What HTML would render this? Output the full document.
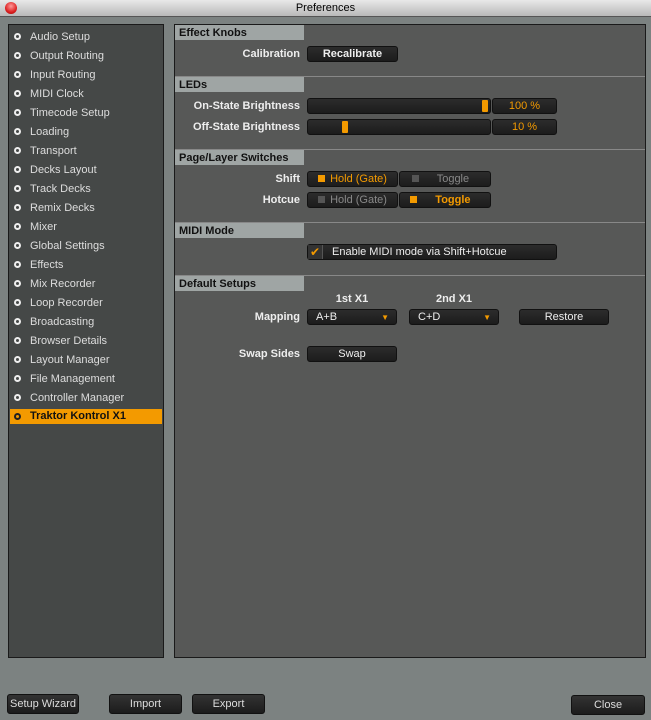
<!DOCTYPE html>
<html><head><style>
*{margin:0;padding:0;box-sizing:border-box}
body{width:651px;height:720px;background:#7c8281;font-family:"Liberation Sans",sans-serif;font-size:11px;position:relative;overflow:hidden;color:#eee}
.a{position:absolute}
#title{left:0;top:0;width:651px;height:17px;background:linear-gradient(#e8e8e8,#b8b8b8);border-bottom:1px solid #555;text-align:center;color:#000;font-size:11px;line-height:16px}
#dot{left:5px;top:2px;width:12px;height:12px;border-radius:50%;background:radial-gradient(circle at 50% 35%,#f99,#d22 60%,#900)}
#left{left:8px;top:24px;width:156px;height:634px;background:#454847;border:1px solid #1a1a1a}
#right{left:174px;top:24px;width:472px;height:634px;background:#575857;border:1px solid #1a1a1a}
.it{position:absolute;left:2px;width:152px;height:15px;line-height:17px;padding-left:20px;color:#ddd}
.it:before{content:"";position:absolute;left:4px;top:4px;width:7px;height:7px;border-radius:50%;border:2px solid #eee;box-sizing:border-box}
.sel{background:#f39a00;color:#111;font-weight:bold;line-height:15px}
.sel:before{border-color:#222;background:#f39a00}
.hd{position:absolute;left:175px;width:129px;height:15px;background:#9fa5a4;color:#111;font-weight:bold;padding-left:4px;line-height:17px}
.ln{position:absolute;left:175px;width:470px;height:1px;background:#888}
.lb{position:absolute;width:126px;text-align:right;left:174px;color:#eee;font-weight:bold;line-height:17px}
.b{position:absolute;background:linear-gradient(#2c2c2c,#1c1c1c);border:1px solid #111;border-radius:3px;color:#eee;text-align:center;line-height:15px;height:16px;font-weight:bold}
.o{color:#f39a00}
.g{color:#888}
.sq{display:inline-block;width:7px;height:7px;margin-right:5px;vertical-align:0}
.bb{position:absolute;background:linear-gradient(#333,#1c1c1c);border:1px solid #111;border-radius:3px;color:#ddd;text-align:center;line-height:19px;height:20px}
</style></head><body>
<div id="title" class="a">Preferences</div><div id="dot" class="a"></div>
<div id="left" class="a"></div>
<div id="right" class="a"></div>
<div class="a" style="left:8px;top:24px">
<div class="it" style="top:5px">Audio Setup</div>
<div class="it" style="top:24px">Output Routing</div>
<div class="it" style="top:43px">Input Routing</div>
<div class="it" style="top:62px">MIDI Clock</div>
<div class="it" style="top:81px">Timecode Setup</div>
<div class="it" style="top:100px">Loading</div>
<div class="it" style="top:119px">Transport</div>
<div class="it" style="top:138px">Decks Layout</div>
<div class="it" style="top:157px">Track Decks</div>
<div class="it" style="top:176px">Remix Decks</div>
<div class="it" style="top:195px">Mixer</div>
<div class="it" style="top:214px">Global Settings</div>
<div class="it" style="top:233px">Effects</div>
<div class="it" style="top:252px">Mix Recorder</div>
<div class="it" style="top:271px">Loop Recorder</div>
<div class="it" style="top:290px">Broadcasting</div>
<div class="it" style="top:309px">Browser Details</div>
<div class="it" style="top:328px">Layout Manager</div>
<div class="it" style="top:347px">File Management</div>
<div class="it" style="top:366px">Controller Manager</div>
<div class="it sel" style="top:385px">Traktor Kontrol X1</div>
</div>
<div class="hd" style="top:25px">Effect Knobs</div>
<div class="lb" style="top:46px">Calibration</div>
<div class="b" style="left:307px;top:46px;width:91px">Recalibrate</div>
<div class="ln" style="top:76px"></div>
<div class="hd" style="top:77px">LEDs</div>
<div class="lb" style="top:98px">On-State Brightness</div>
<div class="b" style="left:307px;top:98px;width:184px"></div>
<div class="a" style="left:482px;top:100px;width:6px;height:12px;background:#f39a00;border-radius:1px"></div>
<div class="b o" style="left:492px;top:98px;width:65px;font-weight:normal">100 %</div>
<div class="lb" style="top:119px">Off-State Brightness</div>
<div class="b" style="left:307px;top:119px;width:184px"></div>
<div class="a" style="left:342px;top:121px;width:6px;height:12px;background:#f39a00;border-radius:1px"></div>
<div class="b o" style="left:492px;top:119px;width:65px;font-weight:normal">10 %</div>
<div class="ln" style="top:149px"></div>
<div class="hd" style="top:150px">Page/Layer Switches</div>
<div class="lb" style="top:171px">Shift</div>
<div class="b o" style="left:307px;top:171px;width:91px;font-weight:normal"><span class="sq" style="background:#f39a00"></span>Hold (Gate)</div>
<div class="b g" style="left:399px;top:171px;width:92px;font-weight:normal"><span class="sq" style="background:#555;margin-right:18px"></span>Toggle&nbsp;&nbsp;&nbsp;</div>
<div class="lb" style="top:192px">Hotcue</div>
<div class="b g" style="left:307px;top:192px;width:91px;font-weight:normal"><span class="sq" style="background:#555"></span>Hold (Gate)</div>
<div class="b o" style="left:399px;top:192px;width:92px"><span class="sq" style="background:#f39a00;margin-right:18px"></span>Toggle&nbsp;&nbsp;&nbsp;</div>
<div class="ln" style="top:222px"></div>
<div class="hd" style="top:223px">MIDI Mode</div>
<div class="b" style="left:307px;top:244px;width:250px;text-align:left;padding-left:24px;font-weight:normal">Enable MIDI mode via Shift+Hotcue</div>
<div class="a" style="left:308px;top:245px;width:15px;height:14px;background:#333;border-right:1px solid #555;color:#f39a00;font-size:12px;line-height:14px;text-align:center">✔</div>
<div class="ln" style="top:275px"></div>
<div class="hd" style="top:276px">Default Setups</div>
<div class="a" style="left:307px;top:293px;width:90px;text-align:center;font-weight:bold">1st X1</div>
<div class="a" style="left:409px;top:293px;width:90px;text-align:center;font-weight:bold">2nd X1</div>
<div class="lb" style="top:309px">Mapping</div>
<div class="b" style="left:307px;top:309px;width:90px;text-align:left;padding-left:8px;font-weight:normal">A+B<span class="o" style="position:absolute;right:7px;font-size:8px">▼</span></div>
<div class="b" style="left:409px;top:309px;width:90px;text-align:left;padding-left:8px;font-weight:normal">C+D<span class="o" style="position:absolute;right:7px;font-size:8px">▼</span></div>
<div class="b" style="left:519px;top:309px;width:90px;font-weight:normal">Restore</div>
<div class="lb" style="top:346px">Swap Sides</div>
<div class="b" style="left:307px;top:346px;width:90px;font-weight:normal">Swap</div>
<div class="bb" style="left:7px;top:694px;width:72px">Setup Wizard</div>
<div class="bb" style="left:109px;top:694px;width:73px">Import</div>
<div class="bb" style="left:192px;top:694px;width:73px">Export</div>
<div class="bb" style="left:571px;top:695px;width:74px">Close</div>
</body></html>
